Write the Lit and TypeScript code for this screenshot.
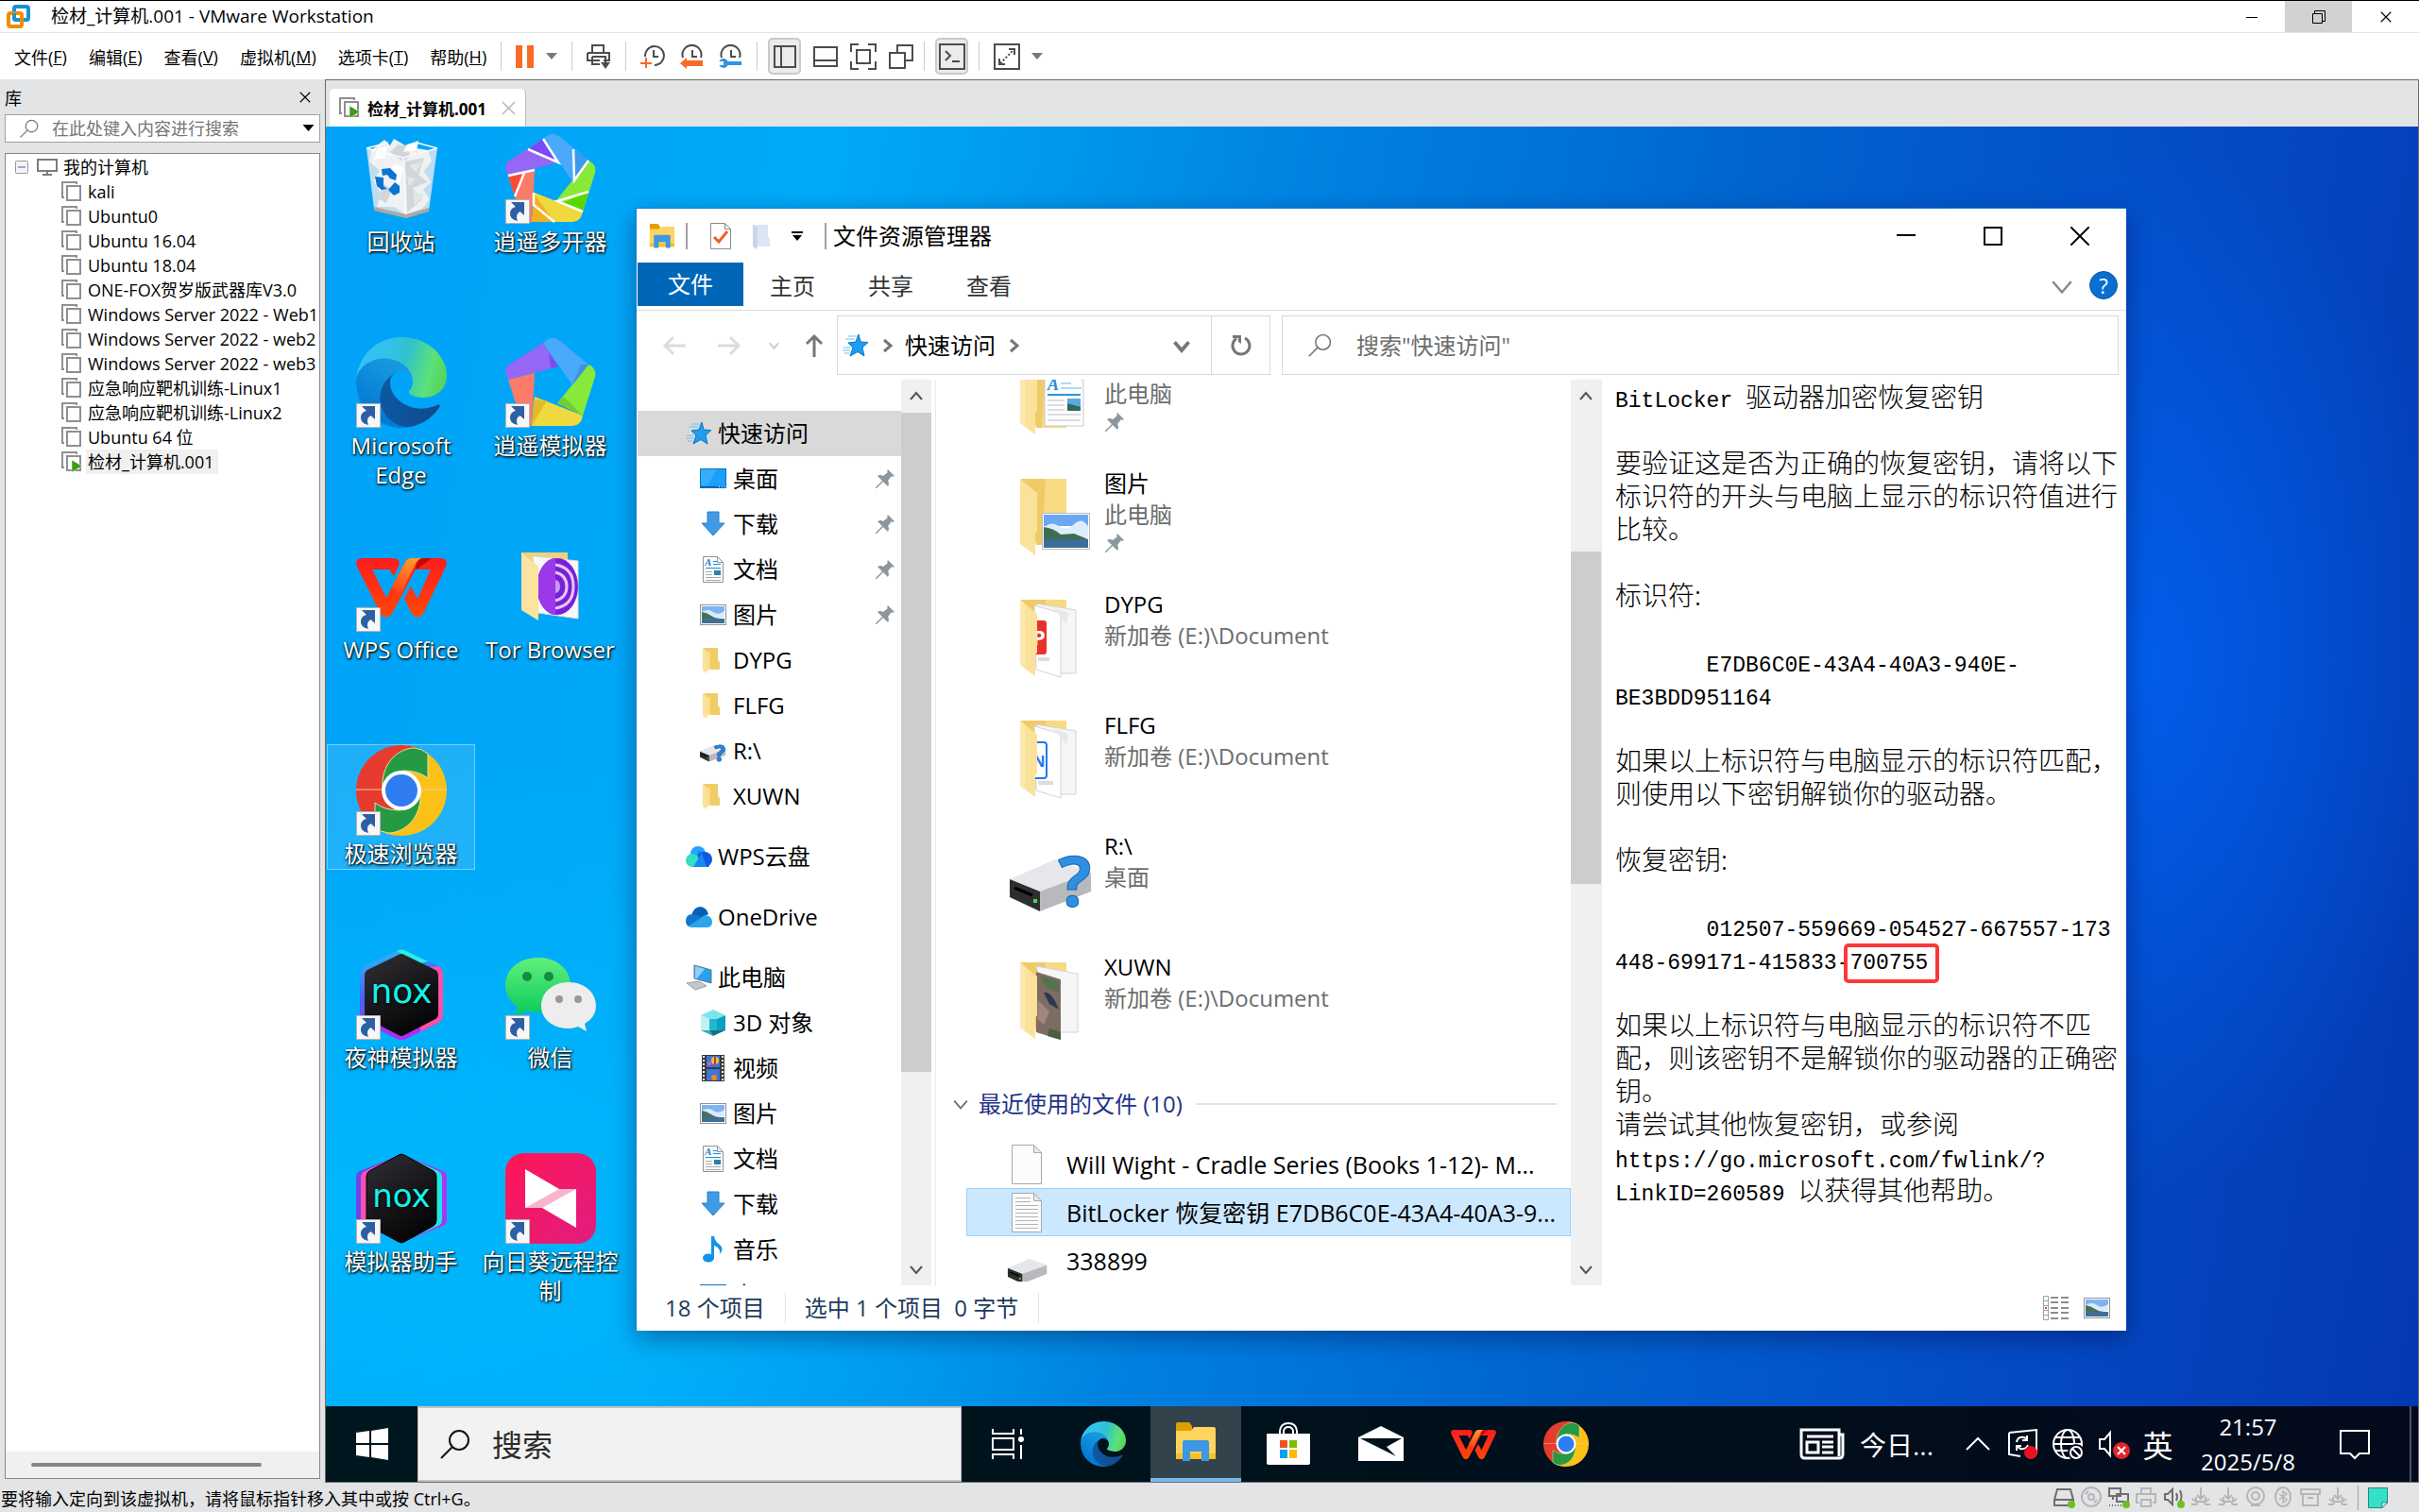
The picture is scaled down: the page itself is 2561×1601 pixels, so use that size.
import { LitElement, html, svg, css, nothing } from "lit";
import { customElement } from "lit/decorators.js";
import { classMap } from "lit/directives/class-map.js";

const base = css`
  :host {
    display: block;
    box-sizing: border-box;
    font-family: "Open Sans", "Noto Sans CJK SC", sans-serif;
    color: #000;
  }
  *,
  *::before,
  *::after {
    box-sizing: border-box;
  }
  button,
  input {
    font: inherit;
    color: inherit;
    background: none;
    border: 0;
    padding: 0;
    margin: 0;
    outline: none;
  }
  button {
    display: flex;
    align-items: center;
    white-space: nowrap;
  }
  svg {
    display: block;
    flex: none;
  }
  ul {
    list-style: none;
    margin: 0;
    padding: 0;
  }
`;

const icon = (w: number, h: number, body: unknown, vb = `0 0 ${w} ${h}`) =>
  html`<svg width=${w} height=${h} viewBox=${vb} fill="none" aria-hidden="true">${body}</svg>`;

/* ---------- logos shared by the desktop and the taskbar ---------- */

const edge = (s: number) =>
  icon(
    s,
    s,
    svg`<defs>
      <linearGradient id="e1" x1="60" y1="178" x2="236" y2="178" gradientUnits="userSpaceOnUse"><stop stop-color="#0c59a4"/><stop offset="1" stop-color="#114a8b"/></linearGradient>
      <linearGradient id="e2" x1="152" y1="60" x2="40" y2="225" gradientUnits="userSpaceOnUse"><stop stop-color="#1b9de2"/><stop offset=".3" stop-color="#1595df"/><stop offset="1" stop-color="#0078d4"/></linearGradient>
      <linearGradient id="e3" x1="10" y1="60" x2="250" y2="130" gradientUnits="userSpaceOnUse"><stop stop-color="#35c1f1"/><stop offset=".25" stop-color="#34c1ed"/><stop offset=".5" stop-color="#2fc2cf"/><stop offset=".8" stop-color="#5be27a"/><stop offset="1" stop-color="#55d35b"/></linearGradient></defs>
      <path fill="url(#e1)" d="M231 190.5c-3.4 1.8-6.9 3.4-10.5 4.7a101.6 101.6 0 0 1-35.9 6.5c-47.3 0-88.5-32.5-88.5-74.3A31.5 31.5 0 0 1 112.500 100c-42.800 1.800-53.800 46.400-53.800 72.500 0 73.900 68.100 81.400 82.800 81.400 7.900 0 19.800-2.300 27-4.600l1.300-.4a128.300 128.300 0 0 0 66.600-52.800 4 4 0 0 0-5.400-5.600Z"/>
      <path fill="url(#e2)" d="M105.700 241.400a79.200 79.200 0 0 1-22.700-21.300 80.700 80.700 0 0 1 29.500-120c3.200-1.500 8.500-4.100 15.600-4a32.400 32.400 0 0 1 25.700 13 31.900 31.900 0 0 1 6.300 18.700c0-.2 24.500-79.600-80-79.600-43.900 0-80 41.600-80 78.200a130.200 130.200 0 0 0 12.100 56 128 128 0 0 0 156.400 67 75.500 75.500 0 0 1-62.800-8Z"/>
      <path fill="url(#e3)" d="M152.300 148.900c-.9 1-3.300 2.500-3.300 5.600 0 2.600 1.700 5.200 4.800 7.300 14.300 10 41.400 8.600 41.500 8.600a59.600 59.600 0 0 0 30.300-8.300 61.400 61.400 0 0 0 30.400-52.900c.3-22.400-8-37.300-11.300-43.900C223.500 23.900 177.700 0 128 0A128 128 0 0 0 0 126.200c.5-36.500 36.800-66 80-66 3.500 0 23.500.3 42 10a72.600 72.600 0 0 1 30.900 29.300c6.100 10.600 7.200 24.100 7.200 29.500s-2.700 13.300-7.800 19.900Z"/>`,
    "0 0 256 256",
  );

const chrome = (s: number) =>
  icon(
    s,
    s,
    svg`<path fill="#e63b2e" d="M48 0a48 48 0 0 0 0 96z"/><path fill="#fbc116" d="M48 0a48 48 0 0 1 0 96z"/>
      <path fill="#e63b2e" d="M48 0Q66 0 77 10L60 12H46z"/><path fill="#fbc116" d="M48 96Q30 96 19 86L36 84H50z"/>
      <path d="M0 47H96" stroke="#f6c8a0"/>
      <path fill="#259a43" stroke="#e8e0a0" d="M28 46C26 20 44 3 62 3Q70 4 76 9V35Q66 27 50 27Q34 28 28 46z"/>
      <path fill="#259a43" stroke="#e8e0a0" d="M68 50C70 76 52 93 34 93Q26 92 20 87V61Q30 69 46 69Q62 68 68 50z"/>
      <circle cx="48" cy="48" r="21" fill="#fff"/><circle cx="48" cy="48" r="17" fill="#2f7df0"/>`,
    "0 0 96 96",
  );

const wps = (s: number) =>
  icon(
    s,
    s,
    svg`<defs><linearGradient id="w1" x1="0" y1="0" x2="0" y2="1"><stop stop-color="#ff1c1f"/><stop offset="1" stop-color="#ff4706"/></linearGradient>
      <linearGradient id="w2" x1=".6" y1="0" x2=".3" y2="1"><stop stop-color="#ff9a2e"/><stop offset="1" stop-color="#ff3a14"/></linearGradient></defs>
      <path fill="url(#w1)" d="M6 18H40Q48 19 45 26L40 37 35 30H17L32 60 52 22Q54 18 59 18H90Q98 19 95 27L71 77Q65 84 59 77L51 61 58 48 65 61 79 30H63L38 77Q32 84 26 77L1 27Q-2 19 6 18z"/>
      <path fill="url(#w2)" d="M52 22Q54 18 59 18H69Q64 20 62 26L45 60 38 48z"/>
      <path fill="#b30000" opacity=".75" d="M63 28Q65 19 71 18H80L64 30z"/>`,
    "0 0 96 96",
  );

const folderTask = (s: number) =>
  icon(
    s,
    s,
    svg`<path fill="#dea000" d="M3 5Q3 3 5 3H17L20 7V14H3z"/><path fill="#ffd560" d="M3 12H19L22 8H43Q45 8 45 10V42H3z"/>
      <path fill="#f9bf2c" d="M3 36H45V42H3z"/><path fill="#3c97e4" d="M10 24Q10 22 12 22H36Q38 22 38 24V44H30V34H18V44H10z"/>`,
    "0 0 48 48",
  );

/* ---------- desktop icons ---------- */

const shortcut = svg`<rect x=".5" y="70.500" width="25" height="25" fill="#f7f7f7" stroke="#b4b4b4"/>
  <path fill="#2d5fa3" d="M6 73H20V87L15.500 83Q10 86 13 93Q4 91 5 84Q6 79 11 78z"/>`;

const recycle = icon(
  96,
  96,
  svg`<path fill="#dfe8ee" opacity=".85" d="M11 16L50 26 86 16 77 82 53 90 19 80z"/>
    <path fill="#f0f1f2" d="M16 18L30 7 36 13 40 6 52 13 66 8 64 16 76 18 80 30 72 40 79 52 71 60 78 70 70 80 52 86 40 78 22 78 26 64 18 50 25 40 14 30z"/>
    <path fill="#d2d6d9" d="M36 20L44 12 52 13 58 24 50 30zM52 30L72 26 66 44 76 52 60 58 70 70 54 84zM27 52L38 60 32 74 25 70z"/>
    <path fill="#e3e6e8" d="M56 34L70 30 64 42zM60 60L72 66 62 76zM54 46L64 48 56 56z"/>
    <path fill="#fff" d="M24 16L34 14 30 26 18 28zM54 12L66 9 64 18 50 20zM40 32L50 36 46 54 34 44z"/>
    <path stroke="#f6fbff" stroke-width="1.500" d="M11 16L50 26 86 16M11 16L34 10M86 16L64 10M50 26L53 88"/>
    <path fill="#b0a8a0" d="M19 78L53 86 77 79 77 83 53 90 19 82z"/>
    <g fill="#0a74d4"><path d="M27 38L36 37 43 44 42 50 36 48 33 44 28 45z"/><path d="M20 46L29 47 29 56 33 59 27 60 22 56z"/><path d="M34 60L41 52 46 56 46 63 40 66z"/></g>`,
);

const pentagon = svg`<path fill="#9468f5" d="M3 45L0 36Q0 31 4 29L40 6 56 31z"/><path fill="#4aa9fa" d="M40 6Q49-3 58 4L88 29 71 51z"/>
  <path fill="#88ea38" d="M88 29Q97 33 95 42L82 83 55 70z"/><path fill="#f0d93c" d="M82 83Q80 94 71 94H28L31 63z"/>
  <path fill="#fa7c68" d="M3 45L31 38 28 94H24Q18 92 16 86z"/>`;

const memu = icon(
  96,
  96,
  svg`${pentagon}<path fill="#8447ee" d="M46 17L56 31 48 33z"/><path fill="#3f93dc" d="M71 51L88 29 80 29z"/><path fill="#74cc30" d="M55 70L62 63 82 83z"/><path fill="#e0bb2e" d="M30 66L44 67 28 94z"/>${shortcut}`,
);
const memuMulti = icon(
  96,
  96,
  svg`${pentagon}<path fill="#7a49fb" d="M24 17L40 6 56 31z"/><path fill="#3c9bec" d="M72 17L88 29 74 47z"/><path fill="#58d800" d="M60 74L88 62 82 83z"/><path fill="#f2b120" d="M31 65L52 94H28z"/><path fill="#fa4c30" d="M3 45L20 42 10 67z"/>
    <path stroke="#fff" stroke-width="2.500" d="M40 6L56 31 24 17M72 17L73 50 88 29M82 83L55 72 88 62M52 94L30 76V63M3 45L31 39M20 42L10 67"/>${shortcut}`,
);

const tor = icon(
  96,
  96,
  svg`<path fill="#f1d27a" d="M17 12H66V40H17z"/><path fill="#f8f8f8" stroke="#ddd" d="M29 16L77 21V82L35 76z"/>
    <ellipse cx="55" cy="48" rx="22" ry="30" fill="#7a1fd8"/>
    <path fill="#9c38ea" d="M53 18a19 30 0 0 0 0 60z"/><g stroke="#e2c8fa" stroke-width="3"><path d="M53 25Q72 28 72 48 72 68 53 71"/><path d="M53 33Q65 36 65 48 65 60 53 63"/></g><path fill="#c89af2" d="M53 41Q58 42 58 48 58 54 53 55z"/>
    <path fill="#fbe3a0" d="M17 12L35 27V84L17 73z"/>`,
);

const hexBody = svg`<defs><linearGradient id="nx" x1="0" y1="0" x2=".5" y2="1"><stop stop-color="#303036"/><stop offset="1" stop-color="#060608"/></linearGradient></defs>`;
const noxText = (size: number) =>
  svg`<text x="48" y="57" text-anchor="middle" font-family="DejaVu Sans, sans-serif" font-size=${size} fill="#12f2ec">nox</text>`;
const nox = icon(
  96,
  96,
  svg`${hexBody}<defs><linearGradient id="nb" x1="0" y1="0" x2=".3" y2="1"><stop stop-color="#27c8f5"/><stop offset=".5" stop-color="#4a60f8"/><stop offset="1" stop-color="#b02cf5"/></linearGradient></defs>
    <path fill="url(#nb)" d="M43 2Q48-1 53 2L87 18Q92 21 92 27V69Q92 75 87 78L53 95Q48 97 43 95L9 78Q4 75 4 69V27Q4 21 9 18z"/>
    <path fill="#28eee4" d="M43 2Q48-1 53 2L76 13 68 15 48 5z"/><path fill="#fb4fa8" d="M75 20L87 18Q92 21 92 27V69Q92 75 87 78L68 88V80L86 70V28z"/>
    <path fill="url(#nx)" d="M45 6Q48 4 51 6L84 22Q87 24 87 28V68Q87 72 84 74L51 91Q48 93 45 91L12 74Q9 72 9 68V28Q9 24 12 22z"/>${noxText(36)}${shortcut}`,
);
const noxHelper = icon(
  96,
  96,
  svg`${hexBody}<path fill="#6a45f2" d="M46 2L4 19Q0 21 0 26V72L46 94z"/><path fill="#a637f8" d="M50 2L92 19Q96 21 96 26V70Q96 75 92 77L50 94z"/>
    <path fill="#fb4fb0" d="M46 2L9 19Q5 21 5 26V72L46 94z"/><path fill="#22e6dc" d="M50 2L87 19Q91 21 91 26V70Q91 75 87 77L50 94z"/>
    <path fill="url(#nx)" stroke="#000" d="M45 2Q48 0 51 2L82 19Q85 21 85 25V71Q85 75 82 77L51 94Q48 96 45 94L14 77Q11 75 11 71V25Q11 21 14 19z"/>${noxText(34)}${shortcut}`,
);
const wechat = icon(
  96,
  96,
  svg`<defs><linearGradient id="wc" x1="0" y1="0" x2="0" y2="1"><stop stop-color="#62f07c"/><stop offset="1" stop-color="#09c95b"/></linearGradient></defs>
    <path fill="url(#wc)" d="M35 9C15 9 0 21 0 38 0 48 5 56 13 61L11 71 23 65Q29 67 35 67C55 67 69 54 69 38S55 9 35 9z"/>
    <circle cx="23" cy="29" r="5" fill="#168a43"/><circle cx="46" cy="29" r="5" fill="#168a43"/>
    <path fill="#ededed" d="M67 35C50 35 38 46 38 60S50 84 67 84Q72 84 77 82L86 87 84 79Q96 72 96 60C96 46 84 35 67 35z"/>
    <circle cx="57" cy="53" r="4" fill="#999"/><circle cx="77" cy="53" r="4" fill="#999"/>${shortcut}`,
);
const sunflower = icon(
  96,
  96,
  svg`<defs><linearGradient id="sf" x1="0" y1="0" x2="1" y2="1"><stop stop-color="#ff1554"/><stop offset="1" stop-color="#e01e80"/></linearGradient></defs>
    <rect width="96" height="96" rx="20" fill="url(#sf)"/><path fill="#fff" d="M21 17L57 38H75V79L39 58H21z"/>
    <path fill="#fbb4ce" d="M57 38H75L39 58H21z"/>${shortcut}`,
);

/* ---------- explorer icons ---------- */

const star = icon(
  28,
  28,
  svg`<path fill="#1f9df0" stroke="#0b77c4" d="M17 2L19 10 27 10.500 21 16 23 25 16 20.500 8 25 11 16 6 11 14 10z"/><path stroke="#6cc0f5" d="M6 4H15M3 7H13M1 16H9M0 19H8M2 22H7"/>`,
);
const desktopSm = icon(28, 28, svg`<rect x=".5" y="3.500" width="27" height="20" fill="#1aa0fa" stroke="#0a6fc0"/><path fill="#4ab6ff" opacity=".6" d="M1 4H18L8 21H1z"/><path stroke="#075a9c" d="M1 22.500H27"/><path stroke="#fff" stroke-dasharray="1 2" d="M20 22.500H27"/>`);
const downSm = icon(28, 28, svg`<path fill="#3f9ae8" stroke="#2a7cc8" d="M8 1H20V13H26L14 26 2 13H8z"/>`);
const picSm = icon(
  28,
  28,
  svg`<rect x=".5" y="3.500" width="27" height="21" fill="#fff" stroke="#8c9499"/><path fill="#7fb4f2" d="M2 5H26V14H2z"/><path fill="#d8ebfb" d="M2 11Q9 7 14 11T26 10V17H2z"/><path fill="#456f5c" d="M2 11Q8 12 12 15T24 18H2z"/><path fill="#3f6f96" d="M2 18H26V23H2z"/>`,
);
const docSm = icon(
  28,
  28,
  svg`<path fill="#fff" stroke="#8c9499" d="M3.500.5H18.500L24.500 6.500V27.500H3.500z"/><path stroke="#8c9499" d="M18.500 1V6.500H24"/><text x="5" y="10" font-family="Liberation Serif, serif" font-style="italic" font-weight="700" font-size="11" fill="#1c7fc8">A</text>
    <path stroke="#1c8bd8" d="M14 5.500H18M14 8.500H22M6 12.500H22"/><path stroke="#a8a8a8" d="M6 16.500H13M6 19.500H13M6 22.500H22M6 25.500H22"/><path fill="#2e7fb0" d="M15 15H22V20H15z"/>`,
);
const folderSm = icon(28, 28, svg`<path fill="#f0cc68" d="M4 1H19V14L21 16V24H9z"/><path fill="#fbe29a" d="M3 1L8 5V28L3 25z"/><path fill="#fbdd84" d="M8 5H11V24H8z"/>`);
const driveBody = svg`<path fill="#dcdde0" d="M2 34L50 13 86 28 88 44 34 66z"/><path fill="#b8b9bd" d="M34 44L88 26V46L34 67z"/><path fill="#e6e7ea" d="M2 33L50 12 88 26 34 46z"/><path fill="#2e2e30" d="M2 33L34 46V67L2 52z"/><path stroke="#000" stroke-width="3" d="M7 42L26 50"/><rect x="27" y="54" width="4" height="4" fill="#3ee04a"/>`;
const question = (x: number, y: number, size: number) =>
  svg`<text x=${x} y=${y} text-anchor="middle" font-family="Open Sans, sans-serif" font-weight="700" font-size=${size} fill="#2f8fe0" stroke="#1565b0">?</text>`;
const driveQSm = icon(28, 28, svg`<g transform="translate(-1 4) scale(.32)">${driveBody}</g>${question(21, 25, 24)}`);
const cloudWps = icon(28, 28, svg`<circle cx="13" cy="11" r="8" fill="#27a3ff"/><path fill="#1a7cf0" d="M8 25L14 8 20 10 25 25z"/><circle cx="20" cy="17" r="8" fill="#0b5be0"/><circle cx="7" cy="18" r="7" fill="#2fe0c4"/><path fill="#1a86f0" d="M8 25L17 10 22 25z"/>`);
const cloudOne = icon(28, 28, svg`<path fill="#0a5fb4" d="M6 13Q8 3 16 3 22 4 24 11L12 17z"/><path fill="#1076d0" d="M0 18Q0 12 6 11 12 11 17 15L3 24Q0 22 0 18z"/><path fill="#2aa5ee" d="M3 24L20 12Q28 13 28 19 28 25 22 25H7Q4 25 3 24z"/>`);
const pcSm = icon(28, 28, svg`<path fill="#2aa0f0" stroke="#5a7a90" d="M9 1L27 6V20L9 15z"/><path fill="#8fd0fa" d="M10 2L20 5 12 15H10z"/><path fill="#c4c8cc" stroke="#9aa0a4" d="M1 20L14 18 22 23 10 27z"/>`);
const cubeSm = icon(28, 28, svg`<path fill="#7ee3ea" d="M14 0L27 6 14 12 1 6z"/><path fill="#c2f0f4" d="M1 6L10 10V22L1 22z"/><path fill="#22b8cc" d="M10 10H18V22H10z"/><path fill="#0d9fc0" d="M18 10L27 6V22L18 22z"/><path fill="#35a8b4" d="M1 22H10L14 28z"/><path fill="#0c7486" d="M10 22H27L14 28z"/>`);
const filmSm = icon(28, 28, svg`<rect x="2" width="24" height="28" fill="#3a3a3a"/><path stroke="#fff" stroke-width="2" stroke-dasharray="2 2" d="M4 1V28M24 1V28"/><path fill="#3f74d8" d="M7 1H21V13H7zM7 15H21V27H7z"/><circle cx="16" cy="6" r="4" fill="#f2c02a"/><path stroke="#d83018" stroke-width="2" d="M16 2V10"/><circle cx="10" cy="9" r="2" fill="#e85ab0"/><circle cx="15" cy="24" r="3" fill="#f08a1c"/>`);
const musicSm = icon(28, 28, svg`<ellipse cx="9" cy="23" rx="6" ry="4.500" fill="#0f93ec"/><path fill="#0f93ec" d="M12 0H15Q16 6 21 9 26 13 21 19 22 12 15 10V23H12z"/>`);
const pin = icon(22, 22, svg`<path fill="#8a979f" d="M14 1L21 8 19 9 18 8 14 13Q16 16 14 19L9 14 2 21 1 21 1 20 8 13 3 8Q6 6 9 8L14 4 13 3z"/>`);

const fold = (inner: unknown) =>
  icon(
    96,
    96,
    svg`<path fill="#efcb68" d="M14 10H62V84H30z"/><path fill="#f8da84" d="M40 10H62V84H36z"/>${inner}<path fill="#fbe29a" d="M13 10L31 25V66L29 68V91L13 79z"/><path fill="#fde9b0" d="M13 10L18 14V83L13 79z"/>`,
  );
const folderDoc = fold(svg`<path fill="#fff" stroke="#c4c8cb" d="M39 10H80V82H39z"/><path fill="#ddd" d="M70 26H80V36z"/><text x="42" y="44" font-family="Liberation Serif, serif" font-style="italic" font-weight="700" font-size="18" fill="#2a8fd0">A</text>
  <path stroke="#60b4e8" d="M56 37H67M56 42H78"/><path stroke="#2b95dc" stroke-width="2" d="M42 49H77"/><path stroke="#b8bcc0" d="M42 55H60M42 60H60M42 65H60M42 70H77M42 76H77"/><path fill="#5ea8dc" d="M63 53H77V66H63z"/><path fill="#2e6a60" d="M63 58L77 62V66H63z"/>`);
const folderPic = icon(
  96,
  96,
  svg`<path fill="#efcb68" d="M14 10H62V80H30z"/><path fill="#f8da84" d="M40 10H62V80H36z"/><path fill="#fbe29a" d="M13 10L31 25V66L29 68V91L13 79z"/><rect x="36.500" y="46.500" width="50" height="38" fill="#fff" stroke="#b8bcc0"/><path fill="#6aa8f4" d="M38 48H85V60H38z"/><path fill="#dceefc" d="M38 62Q46 54 54 60T70 58T85 60V72H38z"/><path fill="#3f6d50" d="M38 61Q48 62 56 69L70 68 85 74H38z"/><path fill="#3c6c98" d="M38 74H85V83H38z"/>`,
);
const pages = svg`<path fill="#f6f6f6" stroke="#d4d4d4" d="M30 14L72 21V88H46z"/><path fill="#fff" stroke="#d4d4d4" d="M28 16L56 24V92L30 84z"/><path fill="#e8e8e8" d="M48 18L64 24 62 36z"/>`;
const folderP = fold(svg`${pages}<rect x="24" y="32" width="17" height="36" rx="3" fill="#e5322c"/><text x="33" y="58" font-family="Open Sans, sans-serif" font-weight="700" font-size="22" text-anchor="middle" fill="#fff">P</text><path fill="#ddd" d="M32 71H44V75H32z"/>`);
const folderN = fold(svg`${pages}<rect x="22" y="33" width="19" height="38" rx="3" fill="#fff" stroke="#2478f0" stroke-width="2"/><text x="33" y="59" font-family="Open Sans, sans-serif" font-weight="700" font-size="16" text-anchor="middle" fill="#2478f0">N</text><path fill="#ddd" d="M32 74H48V78H32z"/>`);
const folderX = fold(svg`<path fill="#f6f6f6" stroke="#d4d4d4" d="M30 14L74 22V84H46z"/><path fill="#7d6c64" d="M30 20L56 28V92L30 84z"/><path fill="#52744c" d="M34 24L54 30V42L40 36z"/><path fill="#2c3850" d="M38 42Q46 40 54 60L44 54z"/><path fill="#a2857c" d="M32 50L44 62 38 76 31 70z"/><path fill="#49603f" d="M44 80L56 84V92L42 88z"/>`);
const driveQ = icon(96, 96, svg`<g transform="translate(0 17)">${driveBody}</g>${question(71, 79, 74)}`);
const driveFile = icon(44, 44, svg`<g transform="translate(0 14) scale(.48)">${driveBody}</g>`);
const fileBlank = icon(44, 44, svg`<path fill="#fcfcfc" stroke="#a8a8a8" d="M5.500 1.500H28.500L36.500 9.500V42.500H5.500z"/><path fill="#e8e8e8" stroke="#a8a8a8" d="M28.500 1.500V9.500H36.500z"/>`);
const fileText = icon(44, 44, svg`<path fill="#fcfcfc" stroke="#a8a8a8" d="M5.500 1.500H28.500L36.500 9.500V42.500H5.500z"/><path fill="#e8e8e8" stroke="#a8a8a8" d="M28.500 1.500V9.500H36.500z"/><path stroke="#b0b4b8" d="M9 6.500H25M9 10.500H25M9 14.500H33M9 18.500H33M9 22.500H33M9 26.500H33M9 30.500H33M9 34.500H33M9 38.500H33"/>`);

const chev = (dir: "up" | "down" | "right", c: string, w = 16, sw = 3) => {
  const d = { up: "M2 11L8 4 14 11", down: "M2 5L8 12 14 5", right: "M5 2L12 8 5 14" }[dir];
  return icon(w, w, svg`<path d=${d} stroke=${c} stroke-width=${sw}/>`, "0 0 16 16");
};
const lens = (s: number, c: string, sw: number) => icon(s, s, svg`<circle cx="20" cy="12" r="10" stroke=${c} stroke-width=${sw}/><path d="M13 19L1 31" stroke=${c} stroke-width=${sw}/>`, "0 0 32 32");

/* ---------- host toolbar icons ---------- */

const K = "#4c4c4c";
const toolIcons = {
  send: icon(26, 26, svg`<path stroke=${K} stroke-width="2" d="M6 9V1H18V9M1 9H24V17H18M14 17H1V9M6 13V21H14M6 13H20V24"/><path fill=${K} d="M15 19H25L20 26z"/>`),
  snap: icon(26, 26, svg`<path stroke=${K} stroke-width="2" d="M5 13A10 10 0 1 1 15 22"/><path stroke=${K} stroke-width="2" d="M14 6V13H19"/><path stroke="#f96a26" stroke-width="2" d="M6 14V25M0 20H12"/>`),
  revert: icon(26, 26, svg`<path stroke=${K} stroke-width="2" d="M4 14A10 10 0 1 1 23 14M14 6V13H19"/><path fill="#f96a26" d="M1 20L8 14V17H25V23H8V26z"/>`),
  manage: icon(26, 26, svg`<path stroke=${K} stroke-width="2" d="M4 14A10 10 0 1 1 23 14M14 6V13H19"/><path stroke="#2f97dc" stroke-width="4" d="M8 20H25"/><circle cx="6" cy="20" r="5" fill="#2f97dc"/><path fill="#fff" d="M0 18H6V22H0z"/>`),
  side: icon(24, 24, svg`<path stroke=${K} stroke-width="2" d="M1 1H23V23H1zM8 1V23"/>`),
  thumb: icon(26, 24, svg`<path stroke=${K} stroke-width="2" d="M1 2H25V22H1zM1 16H25"/>`),
  full: icon(28, 28, svg`<path stroke=${K} stroke-width="2" d="M1 9V1H9M19 1H27V9M27 19V27H19M9 27H1V19M7 7H21V21H7z"/>`),
  unity: icon(26, 26, svg`<path stroke=${K} stroke-width="2" d="M1 9H17V25H1zM9 9V1H25V17H17"/>`),
  console: icon(28, 28, svg`<path stroke=${K} stroke-width="2" d="M1 1H27V27H1zM7 8L12 13 7 18M14 19H22"/>`),
  stretch: icon(28, 28, svg`<path stroke=${K} stroke-width="2" d="M1 1H27V27H1zM16 6H22V12M6 16V22H12"/><path stroke=${K} stroke-width="2" stroke-dasharray="2 2" d="M7 21L21 7"/>`),
};
const vmIcon = (on: boolean) =>
  icon(22, 22, svg`<path stroke="#8f8f8f" stroke-width="2" d="M3 17H1V1H16V3"/><path fill="#fff" stroke="#8f8f8f" stroke-width="2" d="M6 5H20V20H6z"/>${on ? svg`<path fill="#3f9a16" stroke="#fff" stroke-width=".5" d="M11 9L22 15.500 11 22z"/>` : nothing}`);
const caret = (c: string, w = 12) => icon(w, 8, svg`<path fill=${c} d="M0 0H12L6 7z"/>`, "0 0 12 8");
const closeX = (s: number, c: string, sw = 2) => icon(s, s, svg`<path d="M1 1L15 15M15 1L1 15" stroke=${c} stroke-width=${sw}/>`, "0 0 16 16");

/* ================= library panel ================= */

@customElement("library-panel")
class LibraryPanel extends LitElement {
  static styles = [
    base,
    css`
      :host {
        display: flex;
        flex-direction: column;
        width: 344px;
        padding: 0 5px 4px;
        background: #e3e4e6;
        font-size: 18px;
      }
      .head {
        display: flex;
        align-items: center;
        justify-content: space-between;
        height: 37px;
        padding-right: 10px;
      }
      .search {
        display: flex;
        align-items: center;
        height: 30px;
        background: #fff;
        border: 1px solid #a0a0a0;
        padding: 0 4px 0 15px;
        gap: 14px;
      }
      .search input {
        flex: 1;
        min-width: 0;
      }
      .search input::placeholder {
        color: #757575;
        opacity: 1;
      }
      .tree {
        flex: 1;
        margin-top: 11px;
        background: #fff;
        border: 1px solid #828790;
        padding: 1px 0 0 10px;
        overflow: hidden;
        display: flex;
        flex-direction: column;
        min-height: 0;
      }
      .row {
        height: 26px;
        line-height: 26px;
        gap: 6px;
        display: flex;
        align-items: center;
      }
      .root svg:first-child {
        margin-right: 3px;
      }
      .kids {
        padding-left: 49px;
      }
      .kids button {
        height: 26px;
        gap: 4px;
      }
      .kids span {
        padding: 0 2px;
        height: 26px;
        line-height: 26px;
      }
      .current span {
        background: #f0f0f0;
        padding-right: 4px;
      }
      .bar {
        margin: auto 0 0 -10px;
        height: 28px;
        display: flex;
        align-items: center;
        background: #f0f0f0;
        padding-left: 27px;
      }
      .thumb {
        width: 244px;
        height: 4px;
        border-radius: 2px;
        background: #868686;
      }
    `,
  ];
  vms = ["kali", "Ubuntu0", "Ubuntu 16.04", "Ubuntu 18.04", "ONE-FOX贺岁版武器库V3.0", "Windows Server 2022 - Web1", "Windows Server 2022 - web2", "Windows Server 2022 - web3", "应急响应靶机训练-Linux1", "应急响应靶机训练-Linux2", "Ubuntu 64 位", "检材_计算机.001"];
  render() {
    return html`
      <div class="head"><span>库</span><button aria-label="关闭">${closeX(12, "#000", 1.5)}</button></div>
      <label class="search">${lens(20, "#757575", 2)}<input aria-label="搜索库" placeholder="在此处键入内容进行搜索" />${caret("#000", 15)}</label>
      <div class="tree">
        <div class="row root">
          ${icon(14, 14, svg`<rect x=".5" y=".5" width="13" height="13" rx="1" fill="#f4f4f4" stroke="#989898"/><path stroke="#3a5fb0" d="M3 7H11"/>`)}
          ${icon(22, 18, svg`<path stroke="#7c7c7c" stroke-width="2" d="M1 1H21V13H1zM11 13V17M6 17H16"/>`)}
          <span>我的计算机</span>
        </div>
        <ul class="kids">
          ${this.vms.map((v, i) => {
            const cur = i === this.vms.length - 1;
            return html`<li><button class=${classMap({ current: cur })}>${vmIcon(cur)}<span>${v}</span></button></li>`;
          })}
        </ul>
        <div class="bar"><div class="thumb"></div></div>
      </div>
    `;
  }
}

/* ================= file explorer ================= */

type NavItem = { label: string; icon: unknown; root?: boolean; pin?: boolean; gap?: boolean; sel?: boolean };

@customElement("file-explorer")
class FileExplorer extends LitElement {
  static styles = [
    base,
    css`
      :host {
        display: flex;
        flex-direction: column;
        background: #fff;
        font-size: 24px;
        line-height: 32px;
        border: 1px solid #1a7fcc;
        border-width: 1px 0 0 1px;
        box-shadow: 0 8px 24px rgba(0, 10, 60, 0.4);
      }
      .title {
        display: flex;
        align-items: center;
        height: 57px;
        padding: 0 3px 0 12px;
      }
      .title h1 {
        font: inherit;
        margin: 0 auto 0 7px;
      }
      .sep {
        width: 2px;
        height: 28px;
        background: #a0a0a0;
      }
      .quick {
        display: flex;
        align-items: center;
        gap: 22px;
        margin: 0 23px 0 24px;
      }
      .icon-gap {
        margin-right: 10px;
        display: flex;
      }
      .win {
        width: 92px;
        height: 56px;
        justify-content: center;
      }
      .tabs {
        display: flex;
        height: 51px;
        border-bottom: 1px solid #dadbdc;
        align-items: flex-start;
      }
      .tabs button {
        height: 50px;
        width: 104px;
        justify-content: center;
        color: #333;
      }
      .tabs .file {
        width: 112px;
        height: 46px;
        background: #0067b8;
        color: #fff;
        margin-left: 1px;
      }
      .tabs .fold {
        width: 34px;
        margin-left: auto;
      }
      .tabs .help {
        width: 30px;
        height: 30px;
        border-radius: 50%;
        background: #0a6fd0;
        border: 1px solid #0a56a4;
        color: #fff;
        margin: 9px 9px 0 12px;
        font-size: 22px;
      }
      .addr {
        display: flex;
        padding: 5px 8px 5px 0;
        height: 73px;
      }
      .moves {
        display: flex;
        align-items: center;
        width: 212px;
        padding-left: 27px;
        gap: 32px;
      }
      .moves .hist {
        margin: 0 -9px 0 -4px;
      }
      .crumb {
        display: flex;
        align-items: center;
        width: 459px;
        border: 1px solid #d9d9d9;
        padding-left: 5px;
        gap: 11px;
        margin-right: 12px;
      }
      .crumb .down {
        margin-left: auto;
        width: 30px;
      }
      .crumb .reload {
        width: 62px;
        height: 100%;
        border-left: 1px solid #d9d9d9;
        justify-content: center;
      }
      .find {
        flex: 1;
        display: flex;
        align-items: center;
        border: 1px solid #d9d9d9;
        padding-left: 27px;
        gap: 26px;
      }
      .find input {
        flex: 1;
      }
      .find input::placeholder {
        color: #6d6d6d;
        opacity: 1;
      }
      .body {
        flex: 1;
        display: flex;
        min-height: 0;
      }
      .nav {
        width: 280px;
        padding: 33px 0 0 1px;
        overflow: hidden;
      }
      .nav button {
        width: 279px;
        height: 48px;
        padding: 0 6px 0 66px;
        gap: 7px;
      }
      .nav .root {
        padding-left: 51px;
        gap: 6px;
      }
      .nav .gap {
        margin-top: 16px;
      }
      .nav .sel {
        background: #d9d9d9;
      }
      .nav .pin {
        margin-left: auto;
      }
      .sb {
        display: flex;
        flex-direction: column;
        width: 32px;
        background: #f0f0f0;
      }
      .sb button {
        height: 35px;
        justify-content: center;
      }
      .sb i {
        background: #cdcdcd;
      }
      .sb .space {
        background: none;
      }
      .g147 {
        flex: 147;
      }
      .g352 {
        flex: 352;
      }
      .g390 {
        flex: 390;
      }
      .g698 {
        flex: 698;
      }
      .g191 {
        flex: 191;
      }
      .main {
        flex: 1;
        min-width: 0;
        overflow: hidden;
        margin-left: 4px;
        border-left: 1px solid #e8e8e8;
      }
      .folders {
        margin-top: -33px;
        padding-left: 76px;
      }
      .folders li {
        display: flex;
        gap: 6px;
        height: 128px;
      }
      .folders div {
        margin-top: -2px;
      }
      .folders .name,
      .folders .sub {
        display: block;
        line-height: 33px;
      }
      .folders .sub {
        color: #6d6d6d;
      }
      .folders svg:last-child {
        margin-top: 3px;
      }
      .group {
        display: flex;
        align-items: center;
        height: 64px;
        margin: 0 15px 6px 17px;
        color: #1e3287;
      }
      .group h2 {
        font: inherit;
        margin: 0 14px 0 10px;
        white-space: nowrap;
      }
      .group hr {
        flex: 1;
        border: 0;
        border-top: 2px solid #e2e2e2;
        margin: 0;
      }
      .files {
        padding-left: 32px;
        font-size: 25px;
      }
      .files button {
        width: 100%;
        height: 51px;
        border: 1px solid transparent;
        padding-left: 42px;
        gap: 19px;
      }
      .files .sel {
        background: #cce8ff;
        border-color: #99d1ff;
      }
      .preview {
        width: 556px;
        margin: 0;
        padding-left: 14px;
        border-left: 1px solid #eee;
        font: 300 28px/35px "Noto Sans CJK SC", sans-serif;
        white-space: pre;
        overflow: hidden;
      }
      .preview b {
        font: 400 23px/0 "Liberation Mono", monospace;
      }
      .mark {
        position: relative;
      }
      .mark::after {
        content: "";
        position: absolute;
        inset: -8px -12px -8px -6px;
        border: 4px solid #fb3838;
        border-radius: 5px;
      }
      .status {
        display: flex;
        align-items: center;
        height: 48px;
        padding: 0 17px 0 30px;
        color: #1e395b;
        white-space: pre;
      }
      .status span {
        padding-right: 21px;
        border-right: 1px solid #e0e0e0;
        margin-right: 20px;
      }
      .status .modes {
        display: flex;
        gap: 15px;
        margin-left: auto;
      }
    `,
  ];
  nav: NavItem[] = [
    { label: "快速访问", icon: star, root: true, sel: true },
    { label: "桌面", icon: desktopSm, pin: true },
    { label: "下载", icon: downSm, pin: true },
    { label: "文档", icon: docSm, pin: true },
    { label: "图片", icon: picSm, pin: true },
    { label: "DYPG", icon: folderSm },
    { label: "FLFG", icon: folderSm },
    { label: "R:\\", icon: driveQSm },
    { label: "XUWN", icon: folderSm },
    { label: "WPS云盘", icon: cloudWps, root: true, gap: true },
    { label: "OneDrive", icon: cloudOne, root: true, gap: true },
    { label: "此电脑", icon: pcSm, root: true, gap: true },
    { label: "3D 对象", icon: cubeSm },
    { label: "视频", icon: filmSm },
    { label: "图片", icon: picSm },
    { label: "文档", icon: docSm },
    { label: "下载", icon: downSm },
    { label: "音乐", icon: musicSm },
    { label: "桌面", icon: desktopSm },
  ];
  folders = [
    { name: "文档", sub: "此电脑", icon: folderDoc, pin: true },
    { name: "图片", sub: "此电脑", icon: folderPic, pin: true },
    { name: "DYPG", sub: "新加卷 (E:)\\Document", icon: folderP },
    { name: "FLFG", sub: "新加卷 (E:)\\Document", icon: folderN },
    { name: "R:\\", sub: "桌面", icon: driveQ },
    { name: "XUWN", sub: "新加卷 (E:)\\Document", icon: folderX },
  ];
  files = [
    { name: "Will Wight - Cradle Series (Books 1-12)- M...", icon: fileBlank },
    { name: "BitLocker 恢复密钥 E7DB6C0E-43A4-40A3-9...", icon: fileText, sel: true },
    { name: "338899", icon: driveFile },
  ];
  arrow(d: string, c: string) {
    return icon(26, 26, svg`<path d=${d} stroke=${c} stroke-width="3"/>`);
  }
  render() {
    const t = (s: string) => html`<b>${s}</b>`;
    return html`
      <header class="title">
        <span class="icon-gap">${folderTask(30)}</span><i class="sep"></i>
        <div class="quick">
          <button aria-label="属性">${icon(22, 28, svg`<path fill="#fff" stroke="#8a8a8a" d="M.5.5H15.500L21.500 6.500V27.500H.5z"/><path stroke="#8a8a8a" d="M15.500.5V6.500H21.500"/><path stroke="#f0601c" stroke-width="3" d="M4 15L9 20 18 9"/>`)}</button>
          <button aria-label="新建文件夹">${icon(20, 28, svg`<path fill="#dde5f2" d="M1 2H17V14L19 17V25H7z"/><path fill="#c9d6ea" d="M1 2L6 5V28L1 25z"/>`)}</button>
          <button aria-label="自定义快速访问工具栏">${icon(12, 12, svg`<path fill="#000" d="M0 1H12V3H0zM1 5H11L6 11z"/>`)}</button>
        </div>
        <i class="sep"></i>
        <h1>文件资源管理器</h1>
        <button class="win" aria-label="最小化">${icon(20, 20, svg`<path stroke="#000" stroke-width="2" d="M0 9H20"/>`)}</button>
        <button class="win" aria-label="最大化">${icon(20, 20, svg`<path stroke="#000" stroke-width="2" d="M1 1H19V19H1z"/>`)}</button>
        <button class="win" aria-label="关闭">${closeX(22, "#000", 1.5)}</button>
      </header>
      <nav class="tabs">
        <button class="file">文件</button><button>主页</button><button>共享</button><button>查看</button>
        <button class="fold" aria-label="展开功能区">${chev("down", "#8a8a8a", 26, 1.5)}</button><button class="help" aria-label="帮助">?</button>
      </nav>
      <div class="addr">
        <div class="moves">
          <button aria-label="后退">${this.arrow("M12 4L3 13 12 22M3 13H25", "#dcdcdc")}</button>
          <button aria-label="前进">${this.arrow("M14 4L23 13 14 22M23 13H1", "#dcdcdc")}</button>
          <button class="hist" aria-label="最近位置">${chev("down", "#cfcfcf", 13, 2.5)}</button>
          <button aria-label="上移">${this.arrow("M5 11L13 3 21 11M13 3V25", "#767676")}</button>
        </div>
        <div class="crumb">
          ${star}${chev("right", "#767676")}<button>快速访问</button>${chev("right", "#767676")}
          <button class="down" aria-label="以前的位置">${chev("down", "#767676", 20)}</button>
          <button class="reload" aria-label="刷新">${icon(24, 24, svg`<path d="M16 4A9 9 0 1 1 7 4.500" stroke="#767676" stroke-width="3"/><path fill="#767676" d="M3 1H12V10L9 8V4H3z"/>`)}</button>
        </div>
        <label class="find">${lens(25, "#767676", 2)}<input aria-label="搜索快速访问" placeholder='搜索"快速访问"' /></label>
      </div>
      <div class="body">
        <div class="nav">
          ${this.nav.map((n) => html`<button class=${classMap({ root: !!n.root, gap: !!n.gap, sel: !!n.sel })}>${n.icon}<span>${n.label}</span>${n.pin ? html`<span class="pin">${pin}</span>` : nothing}</button>`)}
        </div>
        <div class="sb"><button aria-label="向上滚动">${chev("up", "#555", 16, 2)}</button><i class="g698"></i><i class="space g191"></i><button aria-label="向下滚动">${chev("down", "#555", 16, 2)}</button></div>
        <div class="main">
          <ul class="folders">
            ${this.folders.map((f) => html`<li>${f.icon}<div><span class="name">${f.name}</span><span class="sub">${f.sub}</span>${f.pin ? pin : nothing}</div></li>`)}
          </ul>
          <div class="group">${chev("down", "#666", 18, 1.5)}<h2>最近使用的文件 (10)</h2><hr /></div>
          <div class="files">${this.files.map((f) => html`<button class=${classMap({ sel: !!f.sel })}>${f.icon}<span>${f.name}</span></button>`)}</div>
        </div>
        <div class="sb"><button aria-label="向上滚动">${chev("up", "#555", 16, 2)}</button><i class="space g147"></i><i class="g352"></i><i class="space g390"></i><button aria-label="向下滚动">${chev("down", "#555", 16, 2)}</button></div>
        <p class="preview">${t("BitLocker ")}驱动器加密恢复密钥

要验证这是否为正确的恢复密钥，请将以下
标识符的开头与电脑上显示的标识符值进行
比较。

标识符:

${t("       E7DB6C0E-43A4-40A3-940E-")}
${t("BE3BDD951164")}

如果以上标识符与电脑显示的标识符匹配，
则使用以下密钥解锁你的驱动器。

恢复密钥:

${t("       012507-559669-054527-667557-173")}
${t("448-699171-415833-")}<b class="mark">700755</b>

如果以上标识符与电脑显示的标识符不匹
配，则该密钥不是解锁你的驱动器的正确密
钥。
请尝试其他恢复密钥，或参阅
${t("https://go.microsoft.com/fwlink/?")}
${t("LinkID=260589 ")}以获得其他帮助。</p>
      </div>
      <footer class="status">
        <span>18 个项目</span><span>选中 1 个项目  0 字节</span>
        <div class="modes">
          <button aria-label="详细信息">${icon(28, 28, svg`<path stroke="#8a8f94" stroke-width="2" d="M8 3H16M19 3H27M8 8H16M19 8H27M8 14H16M19 14H27M8 19H16M19 19H27M8 25H16M19 25H27"/><path stroke="#9aa0a5" d="M.5 1.500H5.500V26.500H.5zM.5 6.500H5M.5 11.500H5M.5 16.500H5M.5 21.500H5"/><path fill="#d84028" d="M2 13h2v2h-2z"/>`)}</button>
          <button aria-label="大图标">${picSm}</button>
        </div>
      </footer>
    `;
  }
}

/* ================= guest taskbar ================= */

@customElement("guest-taskbar")
class GuestTaskbar extends LitElement {
  static styles = [
    base,
    css`
      :host {
        display: flex;
        height: 80px;
        background: linear-gradient(90deg, #00171f, #00111c 50%, #030a1c);
        color: #fff;
      }
      button {
        justify-content: center;
        height: 80px;
      }
      .start {
        width: 97px;
      }
      .search {
        display: flex;
        align-items: center;
        width: 576px;
        background: #f2f2f2;
        border: 2px solid #c3c3c3;
        border-width: 2px 1px;
        padding-left: 23px;
        gap: 23px;
        color: #222;
        font-size: 32px;
      }
      .search input {
        flex: 1;
        min-width: 0;
      }
      .search input::placeholder {
        color: #2b2b2b;
        opacity: 1;
      }
      .app {
        width: 98px;
      }
      .view {
        width: 98px;
        margin-right: 3px;
      }
      .app.on {
        width: 96px;
        margin: 0 1px;
        background: #33434c;
        border-bottom: 4px solid #76b9ed;
      }
      .tray {
        display: flex;
        margin-left: auto;
        font-size: 28px;
      }
      .tray button {
        width: 48px;
      }
      .tray .news {
        width: 165px;
        gap: 16px;
        justify-content: flex-start;
      }
      .tray .ime {
        font-size: 32px;
        width: 45px;
      }
      .tray .clock {
        width: 112px;
        flex-direction: column;
        font-size: 24px;
        line-height: 37px;
        margin: 0 17px;
      }
      .tray .note {
        width: 80px;
        margin-right: 18px;
      }
      .tray .peek {
        width: 9px;
        border-left: 2px solid #4a5460;
      }
    `,
  ];
  render() {
    const w = "#fff";
    return html`
      <button class="start" aria-label="开始">${icon(34, 34, svg`<path fill=${w} d="M0 5L14 3V16H0zM16 3L34 0V16H16zM0 18H14V31L0 29zM16 18H34V34L16 31z"/>`)}</button>
      <label class="search">${lens(32, "#111", 2)}<input aria-label="搜索" placeholder="搜索" /></label>
      <button class="view" aria-label="任务视图">${icon(34, 32, svg`<path stroke=${w} stroke-width="2" d="M1 0V5H23V0M1 10H23V22H1zM1 32V27H23V32M31 0V6M31 17V32"/><circle cx="31" cy="11" r="3" fill=${w}/>`)}</button>
      <button class="app" aria-label="Microsoft Edge">${edge(48)}</button>
      <button class="app on" aria-label="文件资源管理器">${folderTask(48)}</button>
      <button class="app" aria-label="Microsoft Store">${icon(48, 48, svg`<path stroke=${w} stroke-width="2" d="M15 14V10Q16 2 24 2T33 10V14M19 14V10Q20 6 24 6T29 10V14"/><path fill=${w} d="M1 13H47V44Q47 46 45 46H3Q1 46 1 44z"/><path fill="#f25022" d="M15 20h8v8h-8z"/><path fill="#7fba00" d="M25 20h8v8h-8z"/><path fill="#00a4ef" d="M15 30h8v9h-8z"/><path fill="#ffb900" d="M25 30h8v9h-8z"/>`)}</button>
      <button class="app" aria-label="邮件">${icon(48, 40, svg`<path fill=${w} d="M0 13L24 1 48 13V38H0z"/><path fill="#00111c" d="M2 14H46L30 23 40 33 22 24z"/>`)}</button>
      <button class="app" aria-label="WPS Office">${wps(48)}</button>
      <button class="app" aria-label="极速浏览器">${chrome(48)}</button>
      <div class="tray">
        <button class="news">${icon(48, 34, svg`<path stroke=${w} stroke-width="3" d="M42 7H46V28Q46 32 42 32H6Q2 32 2 28V2H42V30M8 9H36M8 15H20V26H8zM24 15H36M24 20H36M24 26H36"/>`)}<span>今日...</span></button>
        <button aria-label="显示隐藏的图标">${icon(26, 16, svg`<path stroke=${w} stroke-width="2" d="M1 14L13 2 25 14"/>`)}</button>
        <button aria-label="更新">${icon(34, 34, svg`<path stroke=${w} stroke-width="2" d="M2 5L31 2V28M14 30L2 28V5"/><path stroke=${w} stroke-width="2" d="M10 15Q11 9 18 10L21 12M21 8V13H16M22 18Q20 23 14 22L10 19M10 24V19H15"/><circle cx="25" cy="26" r="7" fill="#e81123"/>`)}</button>
        <button aria-label="网络">${icon(34, 34, svg`<circle cx="16" cy="17" r="15" stroke=${w} stroke-width="2"/><ellipse cx="16" cy="17" rx="7" ry="15" stroke=${w} stroke-width="2"/><path stroke=${w} stroke-width="2" d="M1 17H31M3 10H29M3 24H29"/><circle cx="25" cy="26" r="9" fill="#050c1c"/><circle cx="25" cy="26" r="6" stroke=${w} stroke-width="2"/><path stroke=${w} stroke-width="2" d="M21 22L29 30"/>`)}</button>
        <button aria-label="音量">${icon(34, 34, svg`<path stroke=${w} stroke-width="2" d="M2 12H7L13 5V29L7 22H2z"/><circle cx="25" cy="24" r="9" fill="#e0252b"/><path stroke=${w} stroke-width="2" d="M21 20L29 28M29 20L21 28"/>`)}</button>
        <button class="ime">英</button>
        <button class="clock"><span>21:57</span><span>2025/5/8</span></button>
        <button class="note" aria-label="通知">${icon(34, 34, svg`<path stroke=${w} stroke-width="2" d="M2 3H32V27H22L17 32 12 27H2z"/>`)}</button>
        <button class="peek" aria-label="显示桌面"></button>
      </div>
    `;
  }
}

/* ================= workstation shell ================= */

@customElement("app-root")
class AppRoot extends LitElement {
  static styles = [
    base,
    css`
      :host {
        display: flex;
        flex-direction: column;
        height: 100vh;
        background: #e3e4e6;
        font-size: 18px;
        border-top: 1px solid #000;
        overflow: hidden;
      }
      .title {
        display: flex;
        align-items: center;
        height: 34px;
        background: #fff;
        border-bottom: 1px solid #e3e3e3;
        padding-left: 7px;
        gap: 22px;
      }
      .title h1 {
        font: inherit;
        font-size: 19px;
        line-height: 32px;
        margin: 0 auto 2px 0;
      }
      .wins {
        display: flex;
      }
      .wins button {
        width: 71px;
        height: 33px;
        justify-content: center;
      }
      .wins .on {
        background: #d2d2d2;
      }
      .tools {
        display: flex;
        align-items: center;
        height: 49px;
        background: #fff;
        padding-left: 15px;
        gap: 15px;
      }
      .menus {
        display: flex;
        gap: 23px;
      }
      .sep {
        width: 1px;
        height: 31px;
        background: #ccc;
      }
      .pair {
        gap: 12px;
      }
      .box {
        width: 35px;
        height: 39px;
        justify-content: center;
        background: #ebebed;
        border: 2px solid #cacaca;
        border-radius: 5px;
      }
      .set {
        display: flex;
        align-items: center;
        gap: 15px;
      }
      .set.tight {
        margin: 0 -4px;
        gap: 13px;
      }
      .mid {
        flex: 1;
        display: flex;
        min-height: 0;
      }
      .stage {
        flex: 1;
        min-width: 0;
        display: flex;
        flex-direction: column;
        border: 1px solid #6b6b6b;
      }
      .strip {
        height: 49px;
        padding: 9px 0 0 4px;
      }
      .tab {
        display: flex;
        width: 208px;
        height: 40px;
        align-items: center;
        justify-content: space-between;
        background: #fff;
        border-radius: 5px 5px 0 0;
        border-right: 1px solid #b8b8b8;
        padding: 0 10px 0 10px;
        font-weight: 700;
        font-size: 17px;
      }
      .tab button {
        gap: 8px;
      }
      .desk {
        flex: 1;
        position: relative;
        min-height: 0;
        background:
          radial-gradient(ellipse 340px 560px at 87% 42%, rgba(0, 104, 255, 0.65), rgba(0, 104, 255, 0)),
          radial-gradient(ellipse 900px 500px at 0 85%, rgba(0, 190, 255, 0.7), rgba(0, 190, 255, 0)),
          linear-gradient(100deg, #00a2f8 0, #00aaf8 22%, #0084e2 42%, #0064d0 62%, #044cc6 80%, #0338b2 100%);
      }
      .icons {
        display: grid;
        grid-template-rows: repeat(6, 216px);
        grid-auto-columns: 158px;
        grid-auto-flow: column;
        padding: 6px 0 0 1px;
        justify-content: start;
      }
      .icons button {
        flex-direction: column;
        align-self: start;
        border: 1px solid transparent;
        width: 157px;
        padding: 0 4px 1px;
        color: #fff;
        font-size: 24px;
        line-height: 31px;
        text-shadow: 1px 1px 2px #000, 0 1px 3px rgba(0, 0, 0, 0.8);
        white-space: normal;
        gap: 3px;
      }
      .icons .sel {
        background: rgba(90, 195, 250, 0.35);
        border-color: rgba(150, 220, 255, 0.7);
      }
      .pic {
        position: relative;
      }
      .pic .cut {
        position: absolute;
        left: 0;
        top: 0;
      }
      file-explorer {
        display: flex;
        position: absolute;
        inset: 86px 309px 80px 328px;
      }
      .status {
        display: flex;
        align-items: center;
        justify-content: space-between;
        height: 31px;
        padding: 0 31px 0 1px;
      }
      .devs {
        display: flex;
        gap: 3px;
      }
      .devs button {
        width: 26px;
        justify-content: center;
      }
      .devs .sep {
        height: 26px;
        background: #a0a0a0;
        margin: 0 4px;
      }
    `,
  ];
  icons: [string, unknown, string?][] = [
    ["回收站", recycle],
    ["Microsoft Edge", edge(96), "cut"],
    ["WPS Office", wps(96), "cut"],
    ["极速浏览器", chrome(96), "cut sel"],
    ["夜神模拟器", nox],
    ["模拟器助手", noxHelper],
    ["逍遥多开器", memuMulti],
    ["逍遥模拟器", memu],
    ["Tor Browser", tor],
    ["", nothing],
    ["微信", wechat],
    ["向日葵远程控制", sunflower],
  ];
  menus = [["文件", "F"], ["编辑", "E"], ["查看", "V"], ["虚拟机", "M"], ["选项卡", "T"], ["帮助", "H"]];
  devices() {
    const g = "#b4b6b8";
    const d = "#6c6e70";
    const dot = svg`<circle cx="19" cy="19" r="4" fill="#6cc024"/>`;
    const net = svg`<path stroke=${g} stroke-width="2" d="M11 1V13M7 9L11 13 15 9M1 19H6L8 16H14L16 19H21M2 13L6 16V11M20 13L16 16V11"/>`;
    return [
      svg`<path stroke=${d} stroke-width="2" d="M4 3H18L21 14V20H1V14zM1 14H21"/>${dot}`,
      svg`<circle cx="11" cy="11" r="10" stroke=${g} stroke-width="2"/><circle cx="11" cy="11" r="3" stroke=${g} stroke-width="2"/><path stroke=${g} stroke-width="2" d="M5 8L8 5M14 17L17 14"/>`,
      svg`<path stroke=${d} stroke-width="2" d="M1 2H13V10H1zM9 8H21V16H9zM5 10V14"/><path stroke=${d} stroke-width="2" stroke-dasharray="1 2" d="M1 20H14"/>${dot}`,
      svg`<path stroke=${g} stroke-width="2" d="M6 8V2H16V8M4 17H1V8H21V17H18M6 14H16V21H6z"/>`,
      svg`<path stroke=${d} stroke-width="2" d="M2 8H5L10 3V19L5 14H2zM14 7Q16 11 14 15M18 4Q21 11 18 16"/>${dot}`,
      net,
      net,
      svg`<circle cx="11" cy="10" r="9" stroke=${g} stroke-width="2"/><circle cx="11" cy="10" r="4" stroke=${g} stroke-width="2"/><path stroke=${g} stroke-width="2" d="M6 20H16"/>`,
      svg`<ellipse cx="11" cy="11" rx="8" ry="10" stroke=${g} stroke-width="2"/><path stroke=${g} stroke-width="1.500" d="M7 8L15 14 11 17V5L15 8 7 14"/>`,
      svg`<path stroke=${g} stroke-width="2" d="M1 3H21V8H1zM3 8V20H19V8M8 12H14"/>`,
      net,
    ].map((b) => html`<button aria-label="设备">${icon(24, 24, b)}</button>`);
  }
  render() {
    const T = toolIcons;
    const sep = html`<i class="sep"></i>`;
    const badge = icon(96, 96, shortcut);
    return html`
      <header class="title">
        ${icon(25, 25, svg`<rect x="8" y="2" width="15" height="14" rx="2" stroke="#1793d2" stroke-width="4"/><rect x="2" y="9" width="14" height="14" rx="2" stroke="#f38b00" stroke-width="4"/><path stroke="#1793d2" stroke-width="4" d="M8 9V14Q8 16 10 16H14"/>`)}
        <h1>检材_计算机.001 - VMware Workstation</h1>
        <div class="wins">
          <button aria-label="最小化">${icon(12, 12, svg`<path stroke="#000" d="M0 6.500H12"/>`)}</button>
          <button class="on" aria-label="还原">${icon(14, 14, svg`<path stroke="#000" d="M.5 3.500H10.500V13.500H.5zM2.500 3V.5H13.500V11.500H11"/>`)}</button>
          <button aria-label="关闭">${closeX(12, "#000", 1.5)}</button>
        </div>
      </header>
      <div class="tools">
        <div class="menus">${this.menus.map(([n, k]) => html`<button>${n}(<u>${k}</u>)</button>`)}</div>
        ${sep}
        <button class="pair" aria-label="挂起">${icon(20, 24, svg`<path fill="#f96a26" d="M0 0H7V24H0zM12 0H19V24H12z"/>`)}${caret("#7a7a7a")}</button>
        ${sep}<button aria-label="发送 Ctrl+Alt+Del">${T.send}</button>${sep}
        <div class="set"><button aria-label="拍摄快照">${T.snap}</button><button aria-label="恢复快照">${T.revert}</button><button aria-label="管理快照">${T.manage}</button></div>
        ${sep}
        <div class="set tight"><button class="box" aria-label="显示库">${T.side}</button><button aria-label="缩略图栏">${T.thumb}</button><button aria-label="全屏">${T.full}</button><button aria-label="Unity">${T.unity}</button></div>
        ${sep}<div class="set tight"><button class="box" aria-label="控制台视图">${T.console}</button></div>${sep}
        <button class="pair" aria-label="拉伸">${T.stretch}${caret("#7a7a7a")}</button>
      </div>
      <div class="mid">
        <library-panel></library-panel>
        <div class="stage">
          <div class="strip">
            <div class="tab"><button>${vmIcon(true)}<span>检材_计算机.001</span></button><button aria-label="关闭标签页">${closeX(15, "#b4b4b4", 1.5)}</button></div>
          </div>
          <div class="desk">
            <div class="icons">
              ${this.icons.map(([n, pic, c = ""]) =>
                n ? html`<button class=${c.includes("sel") ? "sel" : ""}><span class="pic">${pic}${c.includes("cut") ? html`<span class="cut">${badge}</span>` : nothing}</span><span>${n}</span></button>` : html`<span></span>`,
              )}
            </div>
            <file-explorer></file-explorer>
          </div>
          <guest-taskbar></guest-taskbar>
        </div>
      </div>
      <footer class="status">
        <span>要将输入定向到该虚拟机，请将鼠标指针移入其中或按 Ctrl+G。</span>
        <div class="devs">${this.devices()}${sep}<button aria-label="消息">${icon(24, 24, svg`<path fill="#35e0c8" stroke="#1f8a80" d="M2.500 1.500H22.500V17L17 22.500H2.500z"/><path fill="#fff" stroke="#1f8a80" d="M22.500 17H17V22.500z"/>`)}</button></div>
      </footer>
    `;
  }
}
